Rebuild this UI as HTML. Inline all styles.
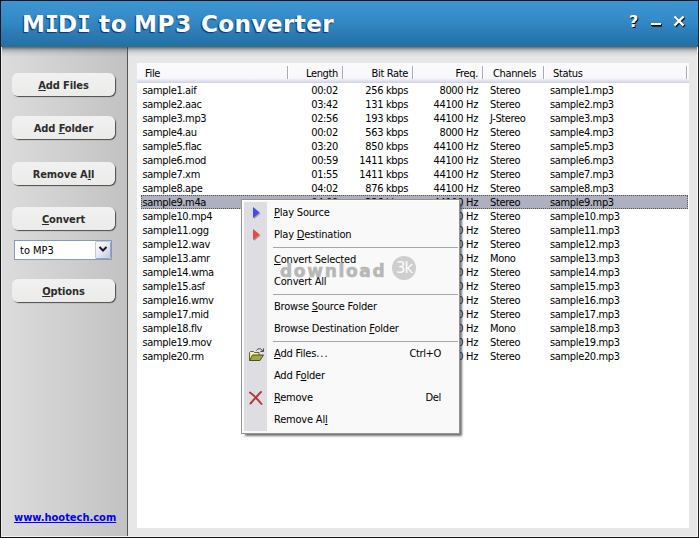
<!DOCTYPE html>
<html><head><meta charset="utf-8"><title>MIDI to MP3 Converter</title>
<style>
*{box-sizing:border-box;margin:0;padding:0}
html,body{width:699px;height:538px;overflow:hidden}
body{position:relative;background:#e7e7e7;font-family:"DejaVu Sans Condensed","Liberation Sans",sans-serif;font-size:11px;letter-spacing:-0.35px;color:#000}
#win{position:absolute;left:0;top:0;width:699px;height:538px;border:1px solid #101418;border-right-color:#222;border-bottom-color:#111;overflow:hidden}
#hl{position:absolute;left:0;top:46px;width:697px;height:490px;box-shadow:inset 1px 0 0 #ebebeb,inset -1px -1px 0 #f4f4f4;z-index:4;pointer-events:none}
#hdr{position:absolute;left:0;top:0;width:697px;height:46px;background:linear-gradient(#3c95d1 0%,#3289c5 45%,#2877b0 80%,#24709f 100%);}
#title span{position:absolute;top:0}
#title .si{font-family:"DejaVu Sans Mono","Liberation Mono",monospace}
#title{position:absolute;left:0;top:8px;width:400px;height:30px;font-family:"DejaVu Sans","Liberation Sans",sans-serif;font-weight:bold;font-size:23px;letter-spacing:0.7px;color:#fff;white-space:nowrap;line-height:30px;text-shadow:-1px 1px 1px rgba(0,30,70,.75)}
#hshadow{position:absolute;left:0;top:46px;width:697px;height:10px;background:linear-gradient(rgba(55,55,55,.7),rgba(80,80,80,.32) 30%,rgba(100,100,100,.12) 60%,rgba(120,120,120,0));z-index:3}
.wb{position:absolute;color:#fff;font-family:"DejaVu Sans","Liberation Sans",sans-serif;font-weight:bold;text-shadow:1px 1px 0 #000}
#side{position:absolute;left:0;top:46px;width:127px;height:490px;background:linear-gradient(90deg,#dcdcdc 0%,#d2d2d2 40%,#c2c2c2 100%);border-right:1px solid #555}
.btn{position:absolute;left:11px;width:103px;height:23px;border-radius:6px;background:linear-gradient(#f0f1f0,#ebecea);box-shadow:1px 1px 1px #4a4a4a;font-family:"DejaVu Sans Condensed","Liberation Sans",sans-serif;font-weight:bold;font-size:11px;letter-spacing:-0.1px;color:#2c2c2c;text-align:center;line-height:22px;padding-top:2px;white-space:nowrap}
.btn u{text-decoration:underline}
#sel{position:absolute;left:13px;top:193px;width:98px;height:20px;background:#fff;border:1px solid #7f9db9;font-size:11px;line-height:20px;letter-spacing:0;padding-left:5px}
#sel .dd{position:absolute;right:0;top:0;width:16px;height:18px;border:1px solid #9aa2c4;border-top-color:#c4c9de;border-left-color:#c4c9de;border-radius:2px;background:linear-gradient(135deg,#ffffff,#e6e8f3 50%,#c3c8df)}
#link{position:absolute;left:13px;top:464px;font-family:"DejaVu Sans Condensed","Liberation Sans",sans-serif;font-weight:bold;font-size:11px;letter-spacing:0;color:#0000ff;text-decoration:underline;white-space:nowrap}
#list{position:absolute;left:136px;top:62px;width:552px;height:465px;background:#fff;overflow:hidden}
#lh{position:absolute;left:0;top:0;width:552px;height:20px;background:linear-gradient(#fbfbfd 0%,#f8f8fc 75%,#e4e4f0 88%,#cfcfe2 100%)}
#lh span{position:absolute;top:1px;line-height:19px;white-space:nowrap}
#lh i{position:absolute;top:3px;width:2px;height:13px;border-left:1px solid #a9a9b9;border-right:1px solid #fff}
.row{position:absolute;left:0;width:552px;height:14px;line-height:14px;white-space:nowrap}
.row span{position:absolute;top:1px}
.row.sel{left:4px;width:547px;background:#aeafbf;outline:1px dotted #555;outline-offset:-1px}
.c1{left:5.500px} .c2{right:351px} .c3{right:281px} .c4{right:211px} .c5{left:353px} .c6{left:413px}
.sel .c1{left:1.500px} .sel .c2{right:350px} .sel .c3{right:280px} .sel .c4{right:210px} .sel .c5{left:349px} .sel .c6{left:409px}
#menu{position:absolute;left:240px;top:198px;width:219px;height:235px;background:#f9f9f9;border:1px solid #929292;box-shadow:3px 3px 2px -1px rgba(70,70,70,.75),inset 1px 1px 0 #fff;z-index:5}
#gut{position:absolute;left:2px;top:2px;width:23px;height:229px;background:#dddde2}
.mi{position:absolute;left:32px;height:22px;line-height:22px;margin-top:1px;white-space:nowrap;letter-spacing:-0.2px}
.sc{position:absolute;right:18px;height:22px;line-height:22px;margin-top:1px;white-space:nowrap}
.sep{position:absolute;left:31px;width:185px;height:1px;background:#a6a6a6}
#wm{position:absolute;left:38px;top:59px;font-family:"DejaVu Sans","Liberation Sans",sans-serif;font-weight:bold;font-size:17px;line-height:24px;color:#8c8c8c;-webkit-text-stroke:0.6px #8c8c8c;opacity:.6;white-space:nowrap;letter-spacing:1.7px}
#wm b{position:absolute;left:112px;top:-3px;width:24px;height:24px;border-radius:12px;background:rgba(140,140,140,.65);color:#fff;-webkit-text-stroke:0;font-weight:normal;text-align:center;font-size:15px;line-height:24px;letter-spacing:-1px}
</style></head><body>
<div id="win">
<div id="hdr"><div id="title"><span style="left:21px">M</span><span class="si" style="left:44px">I</span><span style="left:57px">D</span><span class="si" style="left:76px">I</span> <span style="left:98px">to</span> <span style="left:133px">MP3</span> <span style="left:200px;letter-spacing:0.45px">Converter</span></div>
<div class="wb" style="left:628px;top:11px;font-size:16px;line-height:20px">?</div>
<div style="position:absolute;left:650px;top:22px;width:10px;height:2px;background:#fff;box-shadow:1px 1px 0 #000,0 1px 0 #000,1px 2px 0 rgba(0,0,0,.6)"></div>
<svg style="position:absolute;left:671px;top:13px" width="16" height="15" viewBox="0 0 16 15"><path d="M3.5 3.5l9 9M12.5 3.5l-9 9" stroke="#0a2036" stroke-width="2.6" fill="none"/><path d="M2.5 2.5l9 9M11.5 2.5l-9 9" stroke="#fff" stroke-width="2.4" fill="none"/></svg>
</div>
<div id="hshadow"></div><div id="hl"></div>
<div id="side">
<div class="btn" style="top:26px"><u>A</u>dd Files</div>
<div class="btn" style="top:69px">Add <u>F</u>older</div>
<div class="btn" style="top:115px">Remove A<u>l</u>l</div>
<div class="btn" style="top:160px"><u>C</u>onvert</div>
<div id="sel">to MP3<div class="dd"><svg width="14" height="14" viewBox="0 0 14 14" style="position:absolute;left:0;top:0"><path d="M3.5 5l3.5 3.5L10.500 5" stroke="#1a1a2a" stroke-width="2" fill="none"/></svg></div></div>
<div class="btn" style="top:232px"><u>O</u>ptions</div>
<div id="link">www.hootech.com</div>
</div>
<div id="list">
<div id="lh"><span style="left:8px">File</span><i style="left:150px"></i><span style="right:351px">Length</span><i style="left:205px"></i><span style="right:281px">Bit Rate</span><i style="left:275px"></i><span style="right:211px">Freq.</span><i style="left:345px"></i><span style="left:356px">Channels</span><i style="left:406px"></i><span style="left:416px">Status</span><i style="left:549px"></i></div>
<div id="rows" style="position:absolute;left:0;top:20px">
<div class="row" style="top:0px"><span class="c1">sample1.aif</span><span class="c2">00:02</span><span class="c3">256 kbps</span><span class="c4">8000 Hz</span><span class="c5">Stereo</span><span class="c6">sample1.mp3</span></div>
<div class="row" style="top:14px"><span class="c1">sample2.aac</span><span class="c2">03:42</span><span class="c3">131 kbps</span><span class="c4">44100 Hz</span><span class="c5">Stereo</span><span class="c6">sample2.mp3</span></div>
<div class="row" style="top:28px"><span class="c1">sample3.mp3</span><span class="c2">02:56</span><span class="c3">193 kbps</span><span class="c4">44100 Hz</span><span class="c5">J-Stereo</span><span class="c6">sample3.mp3</span></div>
<div class="row" style="top:42px"><span class="c1">sample4.au</span><span class="c2">00:02</span><span class="c3">563 kbps</span><span class="c4">8000 Hz</span><span class="c5">Stereo</span><span class="c6">sample4.mp3</span></div>
<div class="row" style="top:56px"><span class="c1">sample5.flac</span><span class="c2">03:20</span><span class="c3">850 kbps</span><span class="c4">44100 Hz</span><span class="c5">Stereo</span><span class="c6">sample5.mp3</span></div>
<div class="row" style="top:70px"><span class="c1">sample6.mod</span><span class="c2">00:59</span><span class="c3">1411 kbps</span><span class="c4">44100 Hz</span><span class="c5">Stereo</span><span class="c6">sample6.mp3</span></div>
<div class="row" style="top:84px"><span class="c1">sample7.xm</span><span class="c2">01:55</span><span class="c3">1411 kbps</span><span class="c4">44100 Hz</span><span class="c5">Stereo</span><span class="c6">sample7.mp3</span></div>
<div class="row" style="top:98px"><span class="c1">sample8.ape</span><span class="c2">04:02</span><span class="c3">876 kbps</span><span class="c4">44100 Hz</span><span class="c5">Stereo</span><span class="c6">sample8.mp3</span></div>
<div class="row sel" style="top:112px"><span class="c1">sample9.m4a</span><span class="c2">04:09</span><span class="c3">326 kbps</span><span class="c4">44100 Hz</span><span class="c5">Stereo</span><span class="c6">sample9.mp3</span></div>
<div class="row" style="top:126px"><span class="c1">sample10.mp4</span><span class="c2">03:11</span><span class="c3">128 kbps</span><span class="c4">44100 Hz</span><span class="c5">Stereo</span><span class="c6">sample10.mp3</span></div>
<div class="row" style="top:140px"><span class="c1">sample11.ogg</span><span class="c2">02:47</span><span class="c3">160 kbps</span><span class="c4">44100 Hz</span><span class="c5">Stereo</span><span class="c6">sample11.mp3</span></div>
<div class="row" style="top:154px"><span class="c1">sample12.wav</span><span class="c2">00:31</span><span class="c3">1411 kbps</span><span class="c4">44100 Hz</span><span class="c5">Stereo</span><span class="c6">sample12.mp3</span></div>
<div class="row" style="top:168px"><span class="c1">sample13.amr</span><span class="c2">00:18</span><span class="c3">12 kbps</span><span class="c4">8000 Hz</span><span class="c5">Mono</span><span class="c6">sample13.mp3</span></div>
<div class="row" style="top:182px"><span class="c1">sample14.wma</span><span class="c2">03:55</span><span class="c3">128 kbps</span><span class="c4">44100 Hz</span><span class="c5">Stereo</span><span class="c6">sample14.mp3</span></div>
<div class="row" style="top:196px"><span class="c1">sample15.asf</span><span class="c2">02:10</span><span class="c3">96 kbps</span><span class="c4">44100 Hz</span><span class="c5">Stereo</span><span class="c6">sample15.mp3</span></div>
<div class="row" style="top:210px"><span class="c1">sample16.wmv</span><span class="c2">04:21</span><span class="c3">128 kbps</span><span class="c4">44100 Hz</span><span class="c5">Stereo</span><span class="c6">sample16.mp3</span></div>
<div class="row" style="top:224px"><span class="c1">sample17.mid</span><span class="c2">01:36</span><span class="c3">64 kbps</span><span class="c4">44100 Hz</span><span class="c5">Stereo</span><span class="c6">sample17.mp3</span></div>
<div class="row" style="top:238px"><span class="c1">sample18.flv</span><span class="c2">00:48</span><span class="c3">64 kbps</span><span class="c4">22050 Hz</span><span class="c5">Mono</span><span class="c6">sample18.mp3</span></div>
<div class="row" style="top:252px"><span class="c1">sample19.mov</span><span class="c2">02:29</span><span class="c3">128 kbps</span><span class="c4">44100 Hz</span><span class="c5">Stereo</span><span class="c6">sample19.mp3</span></div>
<div class="row" style="top:266px"><span class="c1">sample20.rm</span><span class="c2">03:03</span><span class="c3">96 kbps</span><span class="c4">44100 Hz</span><span class="c5">Stereo</span><span class="c6">sample20.mp3</span></div>
</div>
</div>
<div id="menu"><div id="gut"></div>
<svg style="position:absolute;left:9px;top:6px" width="10" height="14" viewBox="0 0 10 14"><path d="M3 2l6.500 5.500L3 13z" fill="#9a9a9a"/><path d="M2 1l6.500 5.500L2 12z" fill="#4646ff"/></svg>
<svg style="position:absolute;left:9px;top:28px" width="10" height="14" viewBox="0 0 10 14"><path d="M3 2l6.500 5.500L3 13z" fill="#9a9a9a"/><path d="M2 1l6.500 5.500L2 12z" fill="#ff4040"/></svg>
<div class="mi" style="top:1px"><u>P</u>lay Source</div>
<div class="mi" style="top:23px">Play <u>D</u>estination</div>
<div class="sep" style="top:47px"></div>
<div class="mi" style="top:48px"><u>C</u>onvert Selected</div>
<div class="mi" style="top:70px">Convert All</div>
<div class="sep" style="top:94px"></div>
<div class="mi" style="top:95px">Browse <u>S</u>ource Folder</div>
<div class="mi" style="top:117px">Browse Destination <u>F</u>older</div>
<div class="sep" style="top:141px"></div>
<div class="mi" style="top:142px"><u>A</u>dd Files<span style="letter-spacing:1px">...</span></div><div class="sc" style="top:142px">Ctrl+O</div>
<div class="mi" style="top:164px">Add F<u>o</u>lder</div>
<div class="mi" style="top:186px"><u>R</u>emove</div><div class="sc" style="top:186px">Del</div>
<div class="mi" style="top:208px">Remove Al<u>l</u></div>
<svg style="position:absolute;left:6px;top:147px" width="17" height="16" viewBox="0 0 17 16"><path d="M1.500 13.500V5.500l1-1h3l1 1h4.500v2.500" fill="#f3f3a6" stroke="#5e5e4a" stroke-width="1"/><path d="M1.500 13.500l3-5.500h11l-3.500 5.500z" fill="#a3a348" stroke="#4e4e30" stroke-width="1"/><path d="M8.500 3.500c1.500-2.500 5-2.500 6 .5" stroke="#444" stroke-width="1" fill="none"/><path d="M12.500 4.500h3v-3" stroke="#444" stroke-width="1" fill="none"/></svg>
<svg style="position:absolute;left:6px;top:190px" width="16" height="16" viewBox="0 0 16 16"><path d="M2 2.500C5.500 5 9.500 9 13.500 14M13 2C9.500 5.500 6 9.500 2.500 13.500" stroke="#b23c3c" stroke-width="2" fill="none" stroke-linecap="round"/></svg>
<div id="wm">download<b>3k</b></div>
</div>
</div>
</body></html>
